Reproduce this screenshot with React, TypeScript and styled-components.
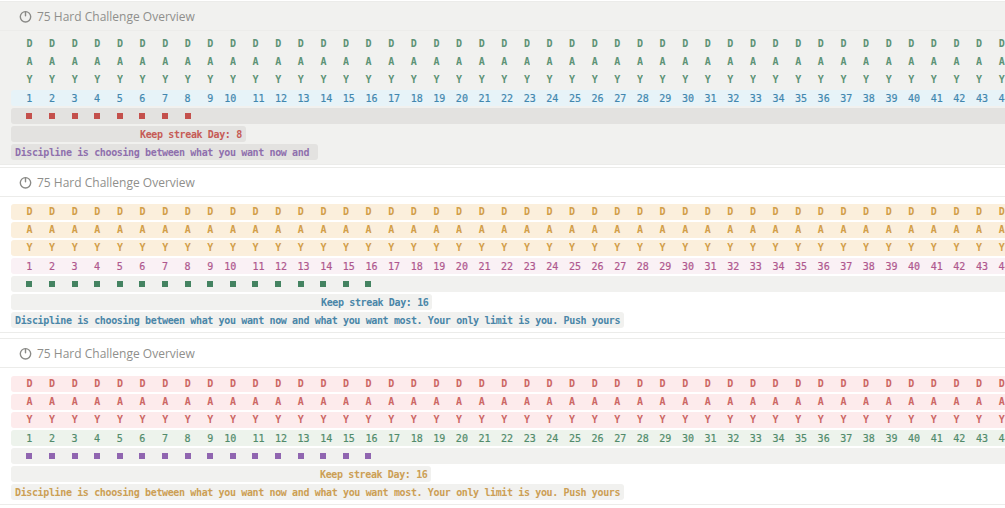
import React from "react";
import styled, { createGlobalStyle } from "styled-components";

const Global = createGlobalStyle`
  html, body { margin: 0; padding: 0; background: #fff; overflow: hidden; }
  #root { width: 1005px; height: 508px; overflow: hidden; }
`;

const Page = styled.div`
  display: flex;
  flex-direction: column;
  width: 1005px;
  height: 508px;
  padding-top: 1px;
  box-sizing: border-box;
`;

const Panel = styled.section<{ $bg: string; $gapTop: number }>`
  background: ${(p) => p.$bg};
  margin-top: ${(p) => p.$gapTop}px;
  border-top: 1px solid #ececea;
  border-bottom: 1px solid #ececea;
  overflow: hidden;
`;

const Header = styled.header`
  display: flex;
  align-items: center;
  gap: 5px;
  height: 28px;
  padding-left: 19px;
  border-bottom: 1px solid #ececea;
  font-family: "Open Sans", sans-serif;
  font-size: 12px;
  color: #8f8f8c;
`;

const Body = styled.div<{ $top: number; $bottom: number }>`
  display: flex;
  flex-direction: column;
  gap: 2px;
  padding: ${(p) => p.$top}px 0 ${(p) => p.$bottom}px 11px;
  font-family: "DejaVu Sans Mono", monospace;
  font-size: 10px;
  font-weight: 700;
  letter-spacing: -0.365px;
`;

const Row = styled.div<{ $bg: string; $fg: string }>`
  display: flex;
  height: 16px;
  align-items: center;
  padding-left: 7px;
  background: ${(p) => p.$bg};
  color: ${(p) => p.$fg};
  border-radius: 3px 0 0 3px;
`;

const Cell = styled.span<{ $shift?: number }>`
  flex: 0 0 22.62px;
  box-sizing: border-box;
  text-align: center;
  padding-left: ${(p) => Math.max(p.$shift ?? 0, 0)}px;
  padding-right: ${(p) => Math.max(-(p.$shift ?? 0), 0)}px;
  padding-bottom: 1px;
  opacity: 0.85;
`;

const NumberCell = styled(Cell)`
  font-size: 10px;
  font-weight: 400;
  letter-spacing: 0;
  padding-bottom: 0;
  -webkit-text-stroke: 0.2px currentColor;
  opacity: 0.92;
`;

const Mark = styled.span<{ $color: string }>`
  flex: 0 0 22.62px;
  display: flex;
  justify-content: center;
  &::before {
    content: "";
    width: 6px;
    height: 6px;
    background: ${(p) => p.$color};
  }
`;

const TextBar = styled.div<{ $bg: string; $fg: string; $indent: number; $end: number }>`
  align-self: flex-start;
  height: 16px;
  line-height: 17px;
  padding-left: ${(p) => p.$indent}px;
  padding-right: ${(p) => p.$end}px;
  background: ${(p) => p.$bg};
  color: ${(p) => p.$fg};
  border-radius: 3px;
  white-space: pre;
`;

const ClockIcon = () => (
  <svg width="13" height="13" viewBox="0 0 13 13" fill="none" stroke="#8a8a87" strokeWidth="1.4">
    <circle cx="6.5" cy="6.8" r="5.2" />
    <path d="M6.5 1.6v4.2" strokeLinecap="round" />
  </svg>
);

const QUOTE_SHORT = "Discipline is choosing between what you want now and";
const QUOTE_LONG = "Discipline is choosing between what you want now and what you want most. Your only limit is you. Push yours";
const CELLS = Array.from({ length: 46 }, (_, i) => i + 1);
const numberShift = (n: number) => (n === 10 ? -5 : n > 10 ? 6 : 0);

type Theme = {
  panelBg: string; gapTop: number; top: number; bottom: number;
  letterBg: string; letterFg: string; numBg: string; numFg: string;
  markBg: string; markFg: string; marks: number;
  keepBg: string; keepFg: string; keepIndent: number; day: number;
  quoteBg: string; quoteFg: string; quote: string; quoteEnd: number;
};

const PANELS: Theme[] = [
  { panelBg: "#f1f1ef", gapTop: 0, top: 5, bottom: 4,
    letterBg: "transparent", letterFg: "#448361", numBg: "#e7f3f8", numFg: "#337ea9",
    markBg: "#e3e2e0", markFg: "#c4504c", marks: 8,
    keepBg: "#e3e2e0", keepFg: "#c65b56", keepIndent: 129, day: 8,
    quoteBg: "#e3e2e0", quoteFg: "#8f70ad", quote: QUOTE_SHORT, quoteEnd: 9 },
  { panelBg: "#ffffff", gapTop: 2, top: 7, bottom: 4,
    letterBg: "#fbefdc", letterFg: "#cb912f", numBg: "#faf1f5", numFg: "#a94b86",
    markBg: "#f1f1ef", markFg: "#448361", marks: 16,
    keepBg: "#f1f1ef", keepFg: "#4a86a8", keepIndent: 310, day: 16,
    quoteBg: "#f1f1ef", quoteFg: "#4a86a8", quote: QUOTE_LONG, quoteEnd: 4 },
  { panelBg: "#ffffff", gapTop: 5, top: 8, bottom: 4,
    letterBg: "#fdebec", letterFg: "#c4504c", numBg: "#edf3ec", numFg: "#448361",
    markBg: "#f1f1ef", markFg: "#9065b0", marks: 16,
    keepBg: "#f1f1ef", keepFg: "#cc9f55", keepIndent: 309, day: 16,
    quoteBg: "#f1f1ef", quoteFg: "#cc9f55", quote: QUOTE_LONG, quoteEnd: 4 },
];

const Overview = ({ t }: { t: Theme }) => (
  <Panel $bg={t.panelBg} $gapTop={t.gapTop}>
    <Header>
      <ClockIcon />
      75 Hard Challenge Overview
    </Header>
    <Body $top={t.top} $bottom={t.bottom}>
      {["D", "A", "Y"].map((letter) => (
        <Row key={letter} $bg={t.letterBg} $fg={t.letterFg}>
          {CELLS.map((n) => <Cell key={n}>{letter}</Cell>)}
        </Row>
      ))}
      <Row $bg={t.numBg} $fg={t.numFg}>
        {CELLS.map((n) => <NumberCell key={n} $shift={numberShift(n)}>{n}</NumberCell>)}
      </Row>
      <Row $bg={t.markBg} $fg={t.markFg}>
        {CELLS.slice(0, t.marks).map((n) => <Mark key={n} $color={t.markFg} />)}
      </Row>
      <TextBar $bg={t.keepBg} $fg={t.keepFg} $indent={t.keepIndent} $end={4}>Keep streak Day: {t.day}</TextBar>
      <TextBar $bg={t.quoteBg} $fg={t.quoteFg} $indent={4} $end={t.quoteEnd}>{t.quote}</TextBar>
    </Body>
  </Panel>
);

export default function App() {
  return (
    <>
      <Global />
      <Page>
        {PANELS.map((t, i) => <Overview key={i} t={t} />)}
      </Page>
    </>
  );
}
